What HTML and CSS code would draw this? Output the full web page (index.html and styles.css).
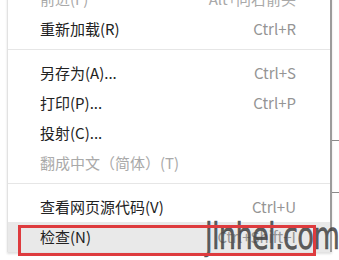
FILE: index.html
```html
<!DOCTYPE html>
<html lang="zh-CN">
<head>
<meta charset="utf-8">
<link rel="stylesheet" href="styles.css">
</head>
<body>
<div class="stage">
  <div class="bg-line bg-line-a"></div>
  <div class="bg-line bg-line-b"></div>
  <div class="menu">
    <div class="item disabled"><span class="label">前进(F)</span><span class="key">Alt+向右箭头</span></div>
    <div class="item"><span class="label">重新加载(R)</span><span class="key">Ctrl+R</span></div>
    <div class="sep"></div>
    <div class="item"><span class="label">另存为(A)...</span><span class="key">Ctrl+S</span></div>
    <div class="item"><span class="label">打印(P)...</span><span class="key">Ctrl+P</span></div>
    <div class="item"><span class="label">投射(C)...</span></div>
    <div class="item disabled"><span class="label">翻成中文（简体）(T)</span></div>
    <div class="sep"></div>
    <div class="item"><span class="label">查看网页源代码(V)</span><span class="key">Ctrl+U</span></div>
    <div class="item hover"><span class="label">检查(N)</span><span class="key">Ctrl+Shift+I</span></div>
  </div>
  <div class="watermark">jinhei.com</div>
  <div class="highlight"></div>
</div>
</body>
</html>
```
FILE: styles.css
```css
html, body {
  margin: 0;
  padding: 0;
  background: #ffffff;
}
.stage {
  position: relative;
  width: 339px;
  height: 260px;
  overflow: hidden;
  font-family: "Noto Sans CJK SC", "Liberation Sans", sans-serif;
  font-size: 15px;
}
.menu {
  margin-top: -16px;
  margin-left: 7px;
  width: 322px;
  background: #ffffff;
  border-left: 1px solid #e2e2e2;
  border-right: 2px solid #9c9c9c;
  box-shadow: 0 2px 2px rgba(0, 0, 0, 0.12);
}
.item {
  display: flex;
  justify-content: space-between;
  align-items: center;
  height: 30px;
  padding: 0 34px 0 32px;
  color: #222222;
  line-height: 30px;
}
.item .key {
  color: #959595;
}
.item.disabled .label,
.item.disabled .key {
  color: #a9a9a9;
}
.item.hover {
  background: #e9e9e9;
}
.sep {
  height: 1px;
  background: #e6e6e6;
  margin: 5px 0 8px;
}
.highlight {
  position: absolute;
  left: 18px;
  top: 225px;
  width: 292px;
  height: 25px;
  border: 3px solid #de3b3e;
}
.watermark {
  position: absolute;
  left: 205px;
  top: 216px;
  font-family: "DejaVu Sans", sans-serif;
  font-size: 38px;
  letter-spacing: -1px;
  color: rgba(65, 65, 65, 0.85);
  line-height: 40px;
  transform: scaleX(0.72);
  transform-origin: left center;
  -webkit-text-stroke: 0.6px rgba(65, 65, 65, 0.85);
}
.bg-line {
  position: absolute;
  left: 332px;
  width: 7px;
  height: 1px;
  background: #8a8a8a;
}
.bg-line-a { top: 140px; }
.bg-line-b { top: 192px; }
```
